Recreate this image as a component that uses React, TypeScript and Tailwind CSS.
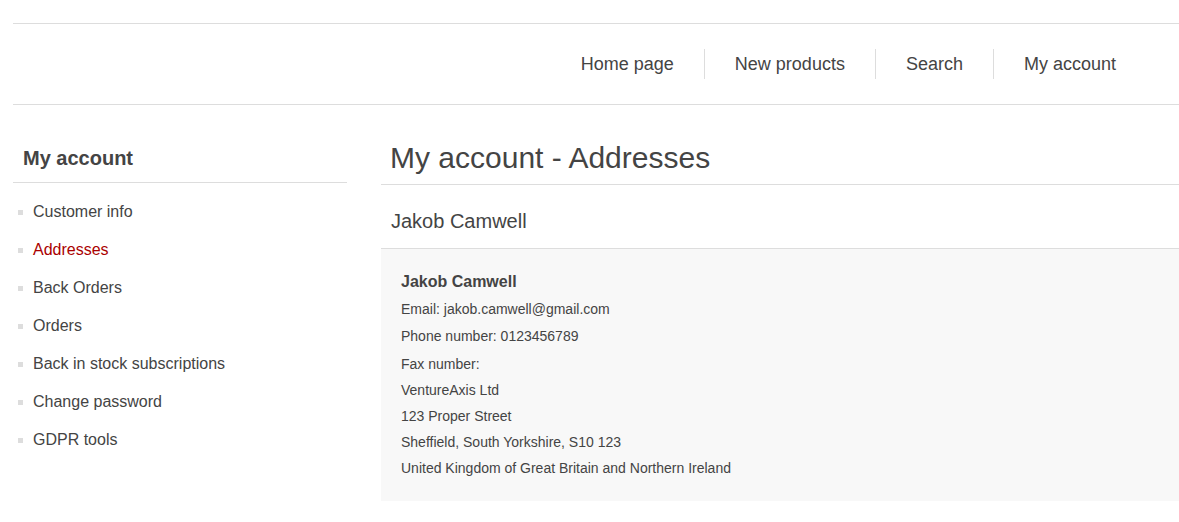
import React from "react";

const navItems = ["Home page", "New products", "Search", "My account"];
const sideItems = [
  "Customer info",
  "Addresses",
  "Back Orders",
  "Orders",
  "Back in stock subscriptions",
  "Change password",
  "GDPR tools",
];

export default function App() {
  return (
    <div className="min-h-[522px] bg-white pl-[13px] font-['Liberation_Sans',Arial,sans-serif] text-[#444]">
      <header className="mt-[23px] flex h-[82px] items-center justify-end border-y border-[#ddd] pr-[33px]">
        {navItems.map((n, i) => (
          <div
            key={n}
            className={
              "px-[30px] text-[18px] leading-[30px] text-[#444] " +
              (i > 0 ? "border-l border-[#ddd]" : "")
            }
          >
            {n}
          </div>
        ))}
      </header>

      <div className="flex">
        <aside className="w-[334px] shrink-0">
          <div className="mt-[41px] border-b border-[#ddd] pb-[12px] pl-[10px] text-[20px] font-bold leading-[24px]">
            My account
          </div>
          <ul className="pt-[10px]">
            {sideItems.map((s) => (
              <li key={s} className="relative flex h-[38px] items-center pl-[20px] text-[16px] leading-[38px]">
                <span className="absolute left-[5px] top-[17px] h-[5px] w-[5px] bg-[#ddd]" />
                <span className={s === "Addresses" ? "text-[#a00]" : "text-[#444]"}>{s}</span>
              </li>
            ))}
          </ul>
        </aside>

        <main className="ml-[34px] flex-1">
          <h1 className="mt-[35px] border-b border-[#ddd] pb-[8px] pl-[9px] text-[30px] font-normal leading-[36px]">
            My account - Addresses
          </h1>
          <div className="border-b border-[#ddd] pb-[13px] pl-[10px] pt-[22px] text-[20px] leading-[28px]">
            Jakob Camwell
          </div>
          <div className="bg-[#f8f8f8] pb-[20px] pl-[20px] pt-[22px] text-[14px] leading-[26px]">
            <div className="text-[16px] font-bold leading-[22px]">Jakob Camwell</div>
            <div className="mt-[3px]">Email: jakob.camwell@gmail.com</div>
            <div className="mt-[1px]">Phone number: 0123456789</div>
            <div className="mt-[2px]">Fax number:</div>
            <div>VentureAxis Ltd</div>
            <div>123 Proper Street</div>
            <div>Sheffield, South Yorkshire, S10 123</div>
            <div>United Kingdom of Great Britain and Northern Ireland</div>
          </div>
        </main>
      </div>
    </div>
  );
}
